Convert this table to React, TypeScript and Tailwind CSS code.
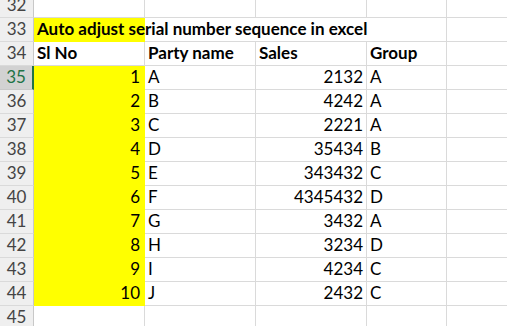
const data: [number, string, number, string][] = [
  [1, 'A', 2132, 'A'],
  [2, 'B', 4242, 'A'],
  [3, 'C', 2221, 'A'],
  [4, 'D', 35434, 'B'],
  [5, 'E', 343432, 'C'],
  [6, 'F', 4345432, 'D'],
  [7, 'G', 3432, 'A'],
  [8, 'H', 3234, 'D'],
  [9, 'I', 4234, 'C'],
  [10, 'J', 2432, 'C'],
]

function RowHead({ n, selected = false }: { n: number; selected?: boolean }) {
  return (
    <div
      className={
        selected
          ? 'flex items-end justify-center border-b border-r-2 border-b-[#c8c8c8] border-r-[#217346] bg-[#d2d2d2] pb-[2px] text-[#217346]'
          : 'flex items-end justify-center border-b border-r border-b-[#dadada] border-r-[#c8c8c8] bg-[#efefef] pb-[2px] text-[#444]'
      }
    >
      {n}
    </div>
  )
}

const cell = 'flex items-end border-b border-r border-[#dadada] px-[3px] pb-[2px] whitespace-nowrap'
const yellow = 'flex items-end justify-end border-b border-r border-[#ffff00] bg-[#ffff00] px-[4px] pb-[2px]'

export default function App() {
  return (
    <div
      className="h-[326px] w-[507px] overflow-hidden bg-white text-[17px] leading-[20px] text-black"
      style={{ fontFamily: 'Lato, "Open Sans", sans-serif' }}
    >
      <div className="grid grid-cols-[34px_111px_111px_111px_80px_1fr] grid-rows-[18px_repeat(13,24px)]">
        {/* 32 */}
        <RowHead n={32} />
        <div className={cell} />
        <div className={cell} />
        <div className={cell} />
        <div className={cell} />
        <div className="border-b border-[#dadada]" />

        {/* 33 */}
        <RowHead n={33} />
        <div className="flex items-end border-b border-r border-[#ffff00] bg-[#ffff00] px-[3px] pb-[2px] font-bold whitespace-nowrap">
          Auto adjust serial number sequence in excel
        </div>
        <div className="border-b border-[#dadada]" />
        <div className="border-b border-[#dadada]" />
        <div className={cell} />
        <div className="border-b border-[#dadada]" />

        {/* 34 */}
        <RowHead n={34} />
        <div className={cell + ' font-bold'}>Sl No</div>
        <div className={cell + ' font-bold'}>Party name</div>
        <div className={cell + ' font-bold'}>Sales</div>
        <div className={cell + ' font-bold'}>Group</div>
        <div className="border-b border-[#dadada]" />

        {data.map(([sl, party, sales, group], i) => (
          <div key={sl} className="contents">
            <RowHead n={35 + i} selected={i === 0} />
            <div className={yellow}>{sl}</div>
            <div className={cell}>{party}</div>
            <div className={cell + ' justify-end'}>{sales}</div>
            <div className={cell}>{group}</div>
            <div className="border-b border-[#dadada]" />
          </div>
        ))}

        {/* 45 */}
        <RowHead n={45} />
        <div className={cell} />
        <div className={cell} />
        <div className={cell} />
        <div className={cell} />
        <div className="border-b border-[#dadada]" />
      </div>
    </div>
  )
}
